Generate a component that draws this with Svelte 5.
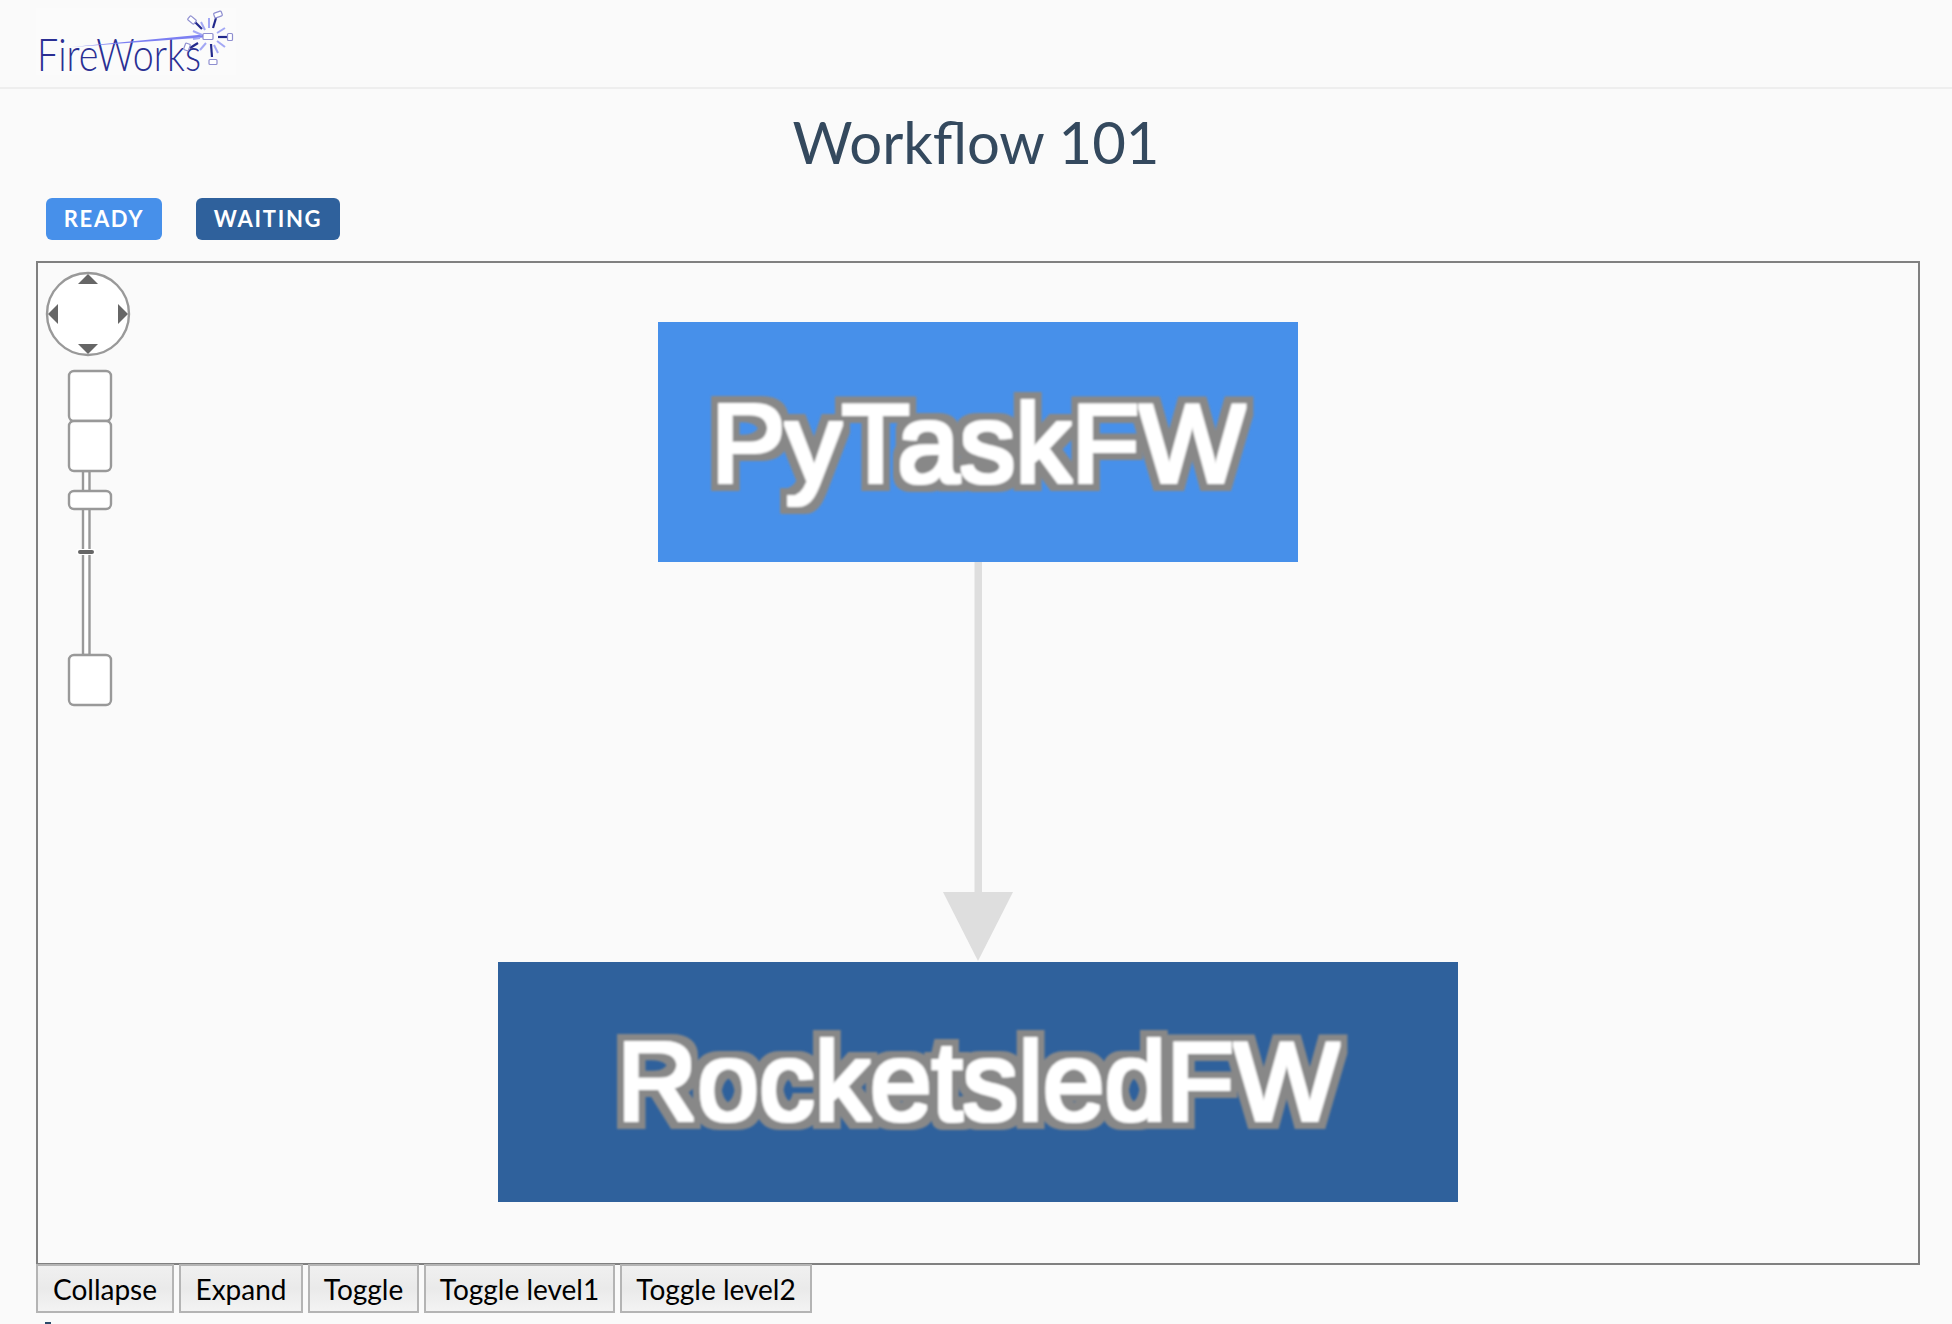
<script>
  const buttons = [
    { label: 'Collapse', width: 138 },
    { label: 'Expand', width: 124 },
    { label: 'Toggle', width: 111 },
    { label: 'Toggle level1', width: 191 },
    { label: 'Toggle level2', width: 192 }
  ];
  const zoomBoxes = [
    { y: 371, h: 50 },
    { y: 421, h: 50 },
    { y: 491, h: 18 },
    { y: 655, h: 50 }
  ];
  const lightRays = [
    [209, 18, 209, 28], [225, 28, 217, 33], [225, 47, 217, 41], [218, 53, 214, 45],
    [200, 50, 206, 43], [193, 31, 202, 35], [193, 39, 200, 38], [201, 22, 205, 30],
    [224, 37, 219, 37]
  ];
  const darkRays = [
    [195, 22, 202, 29], [216, 18, 213, 28], [227, 37, 218, 37], [190, 48, 198, 43], [212, 57, 211, 44]
  ];
</script>

<div class="page">
  <header class="navbar">
    <svg class="logo" width="206" height="79" viewBox="36 8 206 79" role="img" aria-label="FireWorks">
      <rect x="36" y="8" width="200" height="67" fill="#fbfbfb" />
      <text x="37" y="71" class="logo-text" textLength="164" lengthAdjust="spacingAndGlyphs">FireWorks</text>
      <polygon points="72,47 203,34.5 203,37.5" fill="#7c7ff2" />
      {#each lightRays as [x1, y1, x2, y2]}
        <line {x1} {y1} {x2} {y2} stroke="#a3a8f5" stroke-width="2" />
      {/each}
      {#each darkRays as [x1, y1, x2, y2]}
        <line {x1} {y1} {x2} {y2} stroke="#232a8c" stroke-width="2.2" />
      {/each}
      <g fill="#fff" stroke="#8f8fd0" stroke-width="1.2">
        <rect x="203" y="33.5" width="10" height="6" rx="1" />
        <rect x="188" y="17.5" width="8" height="5" rx="1" transform="rotate(40 192 20)" />
        <rect x="214" y="12" width="8" height="5" rx="1" transform="rotate(-20 218 14.5)" />
        <rect x="227.5" y="33.5" width="5" height="7" rx="1" />
        <rect x="184.5" y="43.5" width="5" height="7" rx="1" transform="rotate(20 187 47)" />
        <rect x="209" y="59.5" width="8" height="5" rx="1" />
      </g>
    </svg>
  </header>

  <h1 class="title">Workflow 101</h1>

  <div class="legend">
    <span class="badge ready">READY</span>
    <span class="badge waiting">WAITING</span>
  </div>

  <div class="graph">
    <svg width="1880" height="1000" viewBox="0 0 1880 1000">
      <defs>
        <!-- white letter, fattened, on a wider grey halo -->
        <filter id="halo" x="-5%" y="-20%" width="110%" height="140%">
          <feMorphology in="SourceAlpha" operator="dilate" radius="8.5" result="outer" />
          <feFlood flood-color="#888888" />
          <feComposite in2="outer" operator="in" result="grey" />
          <feMorphology in="SourceAlpha" operator="dilate" radius="2" result="inner" />
          <feFlood flood-color="#ffffff" />
          <feComposite in2="inner" operator="in" result="white" />
          <feMerge result="merged">
            <feMergeNode in="grey" />
            <feMergeNode in="white" />
          </feMerge>
          <feGaussianBlur in="merged" stdDeviation="1" />
        </filter>
      </defs>

      <g transform="translate(-38 -263)">
        <circle class="ctl" cx="88" cy="314" r="41" />
        <polygon class="arrow" points="88,274 78,284 98,284" />
        <polygon class="arrow" points="48,314 58,304 58,324" />
        <polygon class="arrow" points="128,314 118,304 118,324" />
        <polygon class="arrow" points="88,354 78,344 98,344" />

        <rect class="ctl" x="83" y="471" width="6.5" height="184" />
        {#each zoomBoxes as box}
          <rect class="ctl" x="69" y={box.y} width="42" height={box.h} rx="5" />
        {/each}
        <rect class="handle-bg" x="76" y="549" width="20" height="6" rx="3" />
        <rect class="arrow" x="78" y="550" width="16" height="4" rx="2" />
      </g>

      <rect x="936.5" y="299" width="7.5" height="331" fill="#dedede" />
      <polygon points="905,629 975,629 940,698" fill="#dedede" />

      <rect x="620" y="59" width="640" height="240" fill="#4790ea" />
      <text x="940" y="219" class="node-label" textLength="534" lengthAdjust="spacingAndGlyphs" filter="url(#halo)">PyTaskFW</text>

      <rect x="460" y="699" width="960" height="240" fill="#2f619c" />
      <text x="940" y="857" class="node-label" textLength="722" lengthAdjust="spacingAndGlyphs" filter="url(#halo)">RocketsledFW</text>
    </svg>
  </div>

  <div class="toolbar">
    {#each buttons as btn}
      <button style="width: {btn.width}px">{btn.label}</button>
    {/each}
  </div>
  <div class="cut-off"></div>
</div>

<style>
  :global(body) {
    margin: 0;
    background: #fafafa;
    overflow: hidden;
  }
  .page {
    height: 1324px;
    overflow: hidden;
    font-family: Lato, sans-serif;
  }
  .navbar {
    height: 87px;
    border-bottom: 2px solid #eeeeee;
  }
  .logo {
    display: block;
    margin-left: 36px;
    padding-top: 8px;
  }
  .logo-text {
    font-family: Lato, sans-serif;
    font-weight: 300;
    font-size: 45px;
    fill: #2a2f93;
  }
  .title {
    margin: 19px 0 0;
    text-align: center;
    font-size: 58px;
    line-height: 68px;
    font-weight: 400;
    color: #34495e;
  }
  .legend {
    display: flex;
    gap: 34px;
    margin: 22px 0 0 46px;
  }
  .badge {
    height: 42px;
    box-sizing: border-box;
    padding-bottom: 2px;
    display: flex;
    align-items: center;
    justify-content: center;
    border-radius: 6px;
    color: #fff;
    font-size: 22px;
    font-weight: 700;
    letter-spacing: 1.7px;
  }
  .ready {
    width: 116px;
    background: #4790ea;
  }
  .waiting {
    width: 144px;
    background: #2f619c;
  }
  .graph {
    margin: 21px 32px 0 36px;
    height: 1000px;
    border: 2px solid #808080;
    overflow: hidden;
  }
  .graph svg {
    display: block;
  }
  .ctl {
    fill: #fff;
    stroke: #999;
    stroke-width: 2.4;
  }
  .arrow {
    fill: #666;
  }
  .handle-bg {
    fill: #fff;
  }
  .node-label {
    font-family: 'Liberation Sans', Arial, sans-serif;
    font-size: 112px;
    fill: #fff;
    text-anchor: middle;
  }
  .toolbar {
    display: flex;
    gap: 5px;
    margin: -1px 0 0 36px;
  }
  .toolbar button {
    height: 49px;
    box-sizing: border-box;
    padding: 0;
    border: 2px solid #b4b4b4;
    background: linear-gradient(#f0f0f0, #eaeaea 50%, #f3f3f3);
    color: #000;
    font-family: Lato, sans-serif;
    font-size: 28px;
  }
  .cut-off {
    width: 6px;
    height: 2px;
    margin: 9px 0 0 45px;
    background: #2b4a6a;
  }
</style>
